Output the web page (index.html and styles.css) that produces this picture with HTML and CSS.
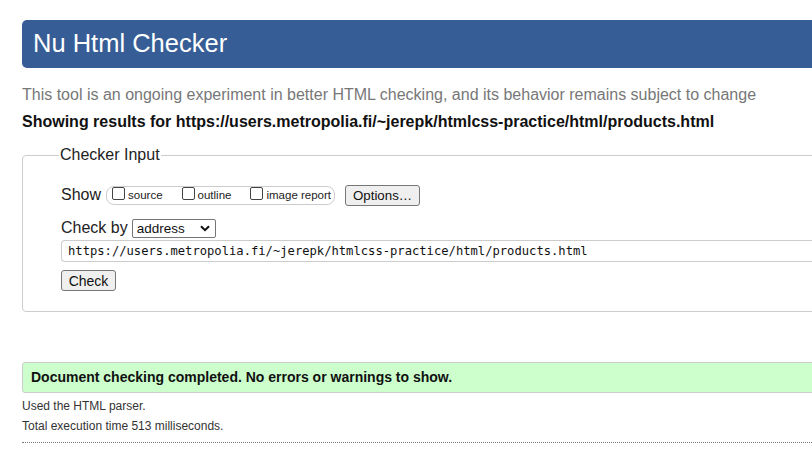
FILE: index.html
```html
<!DOCTYPE html>
<html lang="en">
<head>
<meta charset="utf-8">
<title>Nu Html Checker</title>
<link rel="stylesheet" href="styles.css">
</head>
<body>
<div class="page">
  <h1 class="banner">Nu Html Checker</h1>
  <p class="intro">This tool is an ongoing experiment in better HTML checking, and its behavior remains subject to change</p>
  <p class="results-for">Showing results for https://users.metropolia.fi/~jerepk/htmlcss-practice/html/products.html</p>
  <fieldset class="checker">
    <legend class="checker-legend">Checker Input</legend>
    <div class="row show-row">
      <span class="row-label">Show</span>
      <div class="show-box">
        <label class="opt"><span class="cb"></span><span class="opt-text">source</span></label>
        <label class="opt"><span class="cb"></span><span class="opt-text">outline</span></label>
        <label class="opt"><span class="cb"></span><span class="opt-text">image report</span></label>
      </div>
      <span class="btn options-btn">Options…</span>
    </div>
    <div class="row checkby-row">
      <span class="row-label">Check by</span>
      <span class="select">address<svg class="chev" width="10" height="7" viewBox="0 0 10 7"><path d="M1 1.2 L5 5.2 L9 1.2" fill="none" stroke="#111" stroke-width="2"/></svg></span>
    </div>
    <div class="url-input">https://users.metropolia.fi/~jerepk/htmlcss-practice/html/products.html</div>
    <div class="row"><span class="btn check-btn">Check</span></div>
  </fieldset>
  <div class="success">Document checking completed. No errors or warnings to show.</div>
  <p class="meta">Used the HTML parser.</p>
  <p class="meta">Total execution time 513 milliseconds.</p>
  <div class="dotted"></div>
</div>
</body>
</html>
```

FILE: styles.css
```css
html { overflow: hidden; background: #fff; }
body {
  margin: 0;
  font-family: "Liberation Sans", Arial, sans-serif;
  color: #111;
}
.page {
  width: 1000px;
  padding: 20px 0 0 22px;
}
.banner {
  margin: 0;
  height: 48px;
  box-sizing: border-box;
  padding: 8px 0 0 11px;
  background: #365d95;
  color: #fff;
  border-radius: 5px;
  font-size: 25.5px;
  font-weight: normal;
  line-height: 30px;
}
.intro {
  margin: 16px 0 0 0;
  font-size: 16px;
  line-height: 22px;
  color: #777;
}
.results-for {
  margin: 6px 0 0 0;
  font-size: 16px;
  line-height: 20px;
  font-weight: bold;
  color: #111;
}
.checker {
  margin: 14px 0 0 0;
  border: 1px solid #ccc;
  border-radius: 4px;
  padding: 13px 0 16px 38px;
  height: 166px;
  box-sizing: border-box;
}
.checker-legend {
  margin-left: -2px;
  padding: 0 1px;
  font-size: 16px;
  color: #222;
}
.row {
  display: flex;
  align-items: center;
}
.row-label {
  font-size: 16px;
  color: #222;
}
.show-row { height: 22px; margin-top: 7px; }
.show-box {
  display: flex;
  align-items: center;
  margin-left: 5px;
  height: 17px;
  width: 222px;
  border: 1px solid #ccc;
  border-radius: 8px;
  padding-left: 5px;
  box-sizing: content-box;
}
.opt {
  display: flex;
  align-items: center;
  font-size: 11.5px;
  color: #222;
}
.opt + .opt { margin-left: 19px; }
.cb {
  width: 11px;
  height: 11px;
  border: 1px solid #444;
  border-radius: 2px;
  background: #fff;
  margin-right: 3px;
  margin-top: -3px;
}
.btn {
  display: inline-flex;
  align-items: center;
  justify-content: center;
  background: #efefef;
  border: 1px solid #767676;
  border-radius: 3px;
  font-size: 13.3px;
  color: #111;
  box-sizing: border-box;
}
.options-btn {
  margin-left: 10px;
  width: 75px;
  height: 21px;
}
.checkby-row { margin-top: 12px; height: 20px; }
.select {
  display: inline-flex;
  align-items: center;
  justify-content: space-between;
  margin-left: 4px;
  width: 84px;
  height: 19px;
  box-sizing: border-box;
  border: 1px solid #767676;
  border-radius: 2px;
  padding: 0 5px 0 4px;
  font-size: 13.5px;
  color: #111;
}
.chev { display: block; }
.url-input {
  margin-top: 2px;
  height: 22px;
  box-sizing: border-box;
  border: 1px solid #ccc;
  border-right: none;
  border-radius: 4px 0 0 4px;
  padding: 0 0 0 6px;
  font-family: "DejaVu Sans Mono", "Liberation Mono", monospace;
  font-size: 12.17px;
  line-height: 20px;
  color: #111;
}
.check-btn {
  margin-top: 8px;
  width: 55px;
  height: 21px;
  font-size: 14px;
}
.success {
  margin-top: 50px;
  height: 31px;
  box-sizing: border-box;
  background: #ccffcc;
  border: 1px solid #ccc;
  border-radius: 3px;
  padding: 0 0 0 8px;
  font-size: 14px;
  font-weight: bold;
  line-height: 29px;
  color: #111;
}
.meta {
  margin: 6px 0 0 0;
  font-size: 12px;
  line-height: 14px;
  color: #333;
}
.meta + .meta { margin-top: 6px; }
.dotted {
  margin-top: 9px;
  border-top: 1px dotted #777;
}
```
